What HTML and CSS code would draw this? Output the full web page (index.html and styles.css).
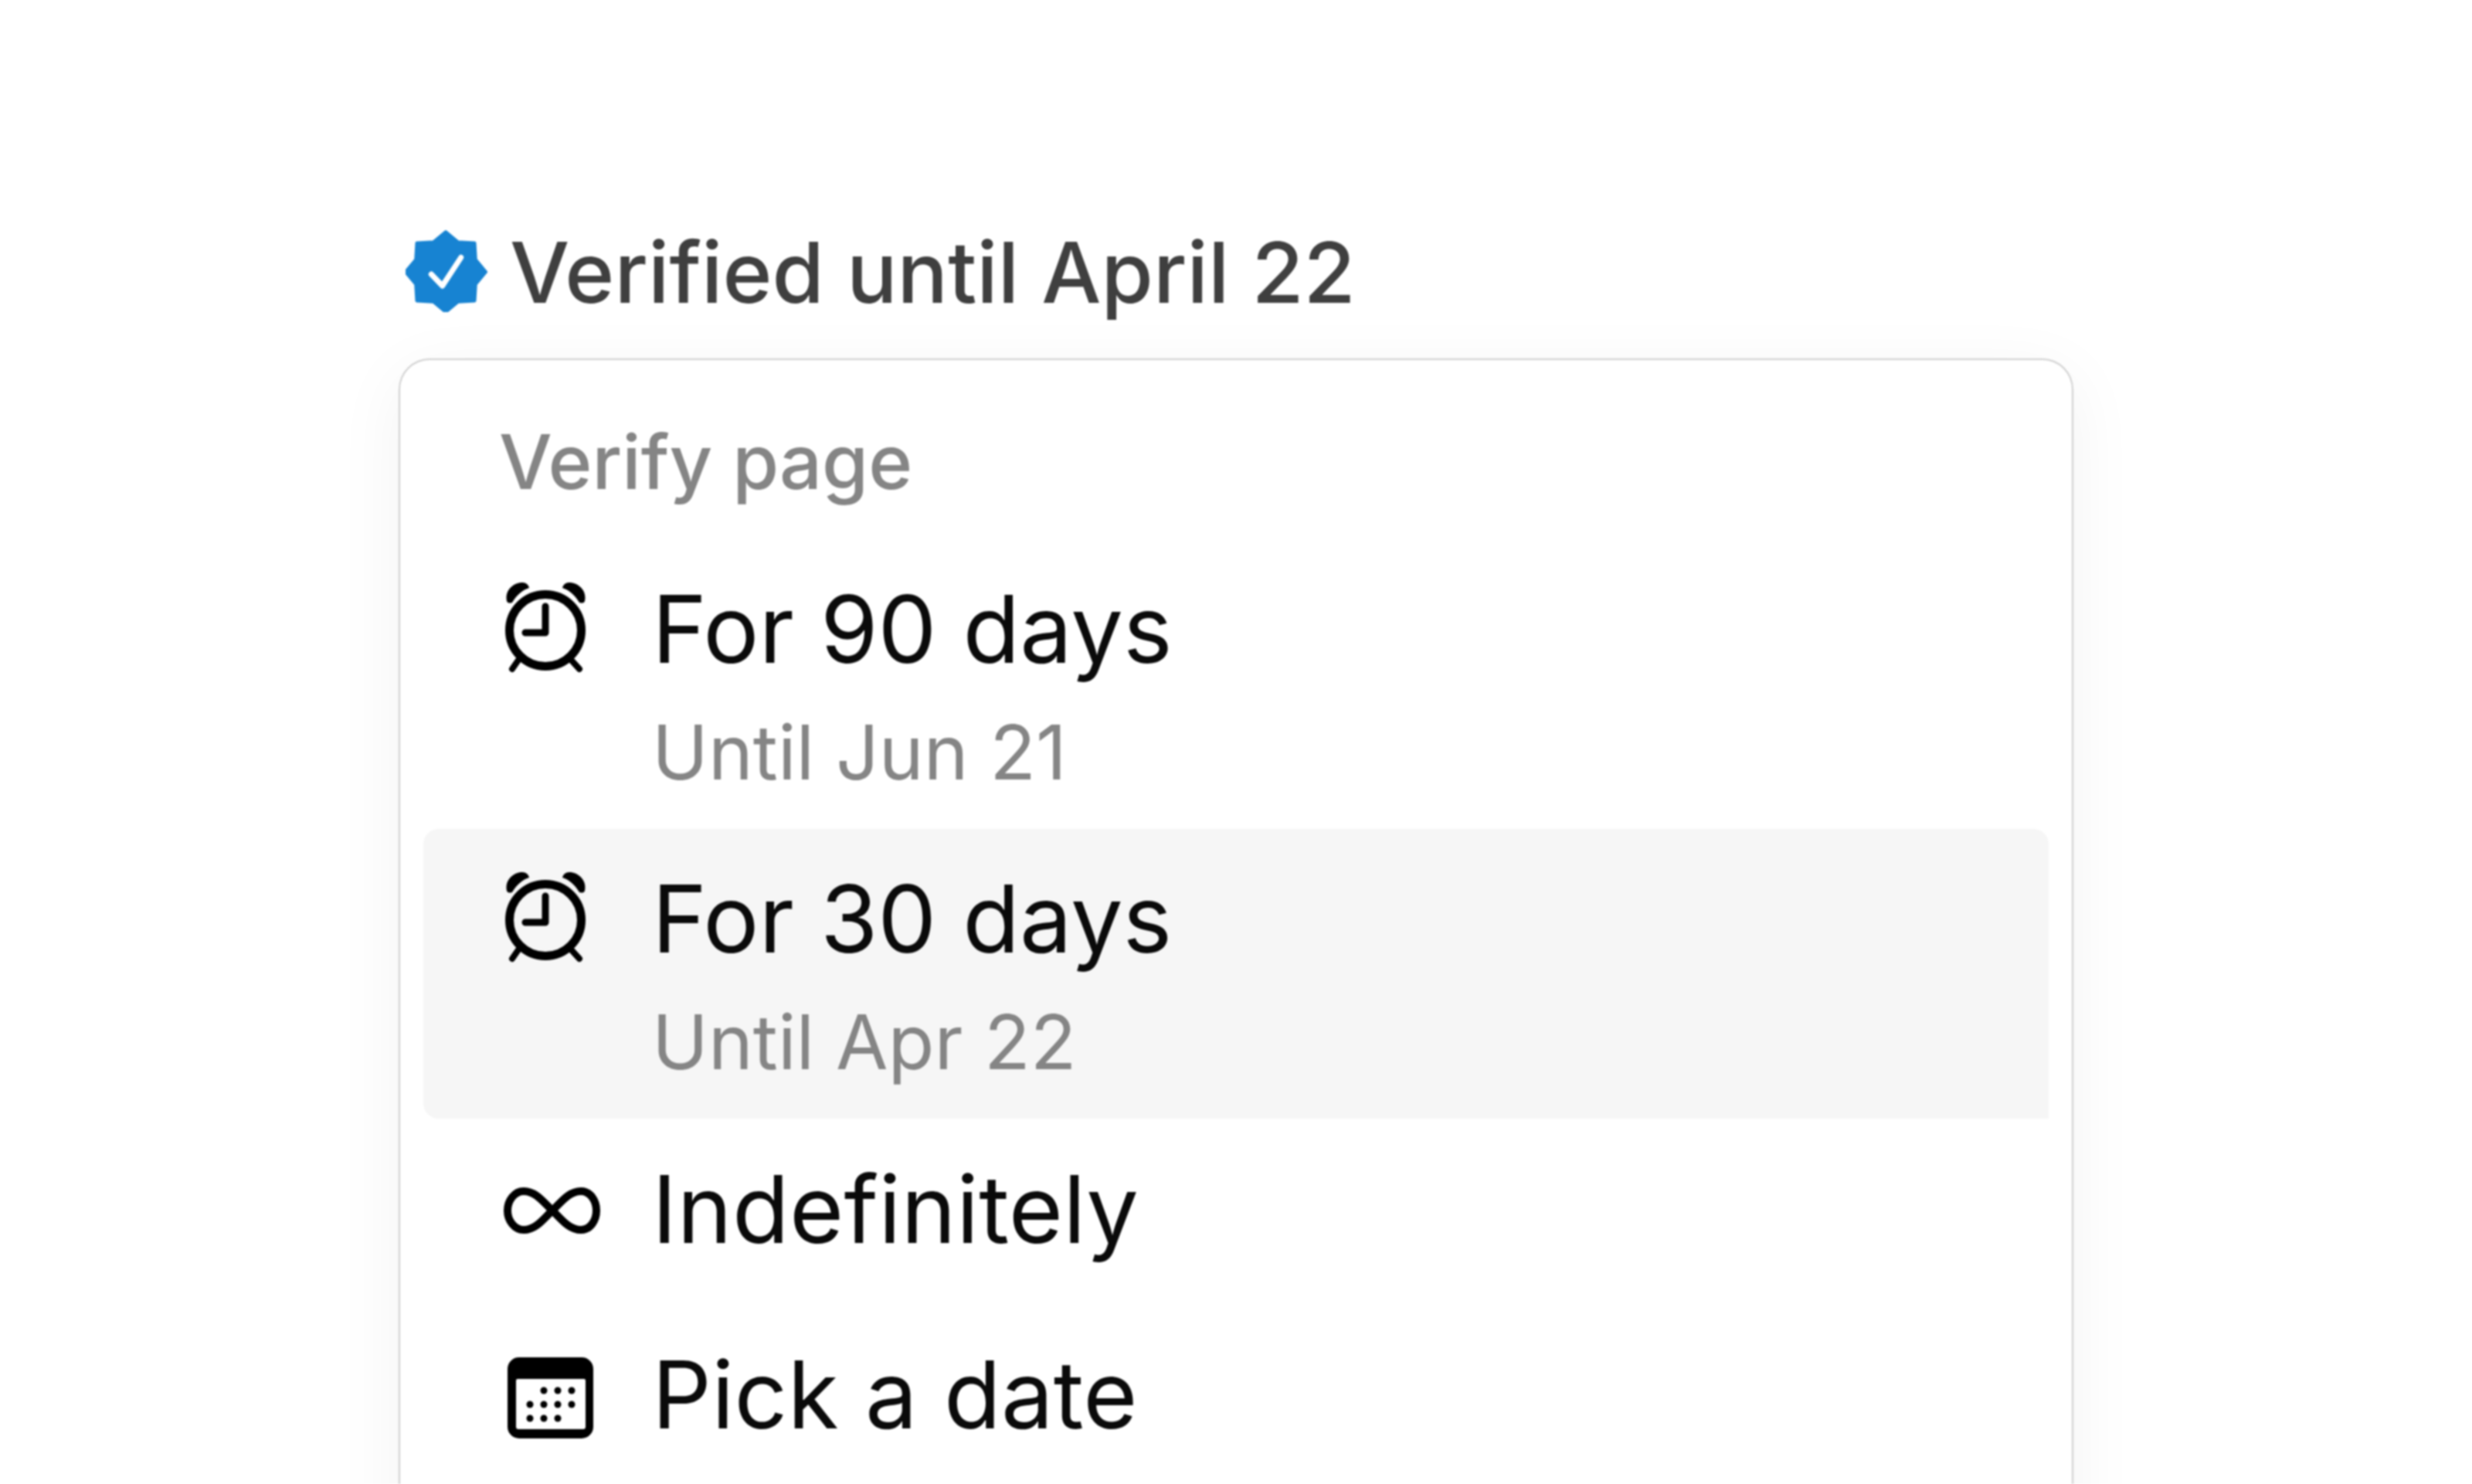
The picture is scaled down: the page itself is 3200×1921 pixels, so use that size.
FILE: index.html
```html
<!DOCTYPE html>
<html lang="en">
<head>
<meta charset="utf-8">
<title>Verify page</title>
<link rel="stylesheet" href="styles.css">
</head>
<body>
<main class="stage">
  <div class="status">
    <svg class="badge" viewBox="0 0 108 108">
      <path fill="#1783d2" stroke="#1783d2" stroke-width="4" stroke-linejoin="round" d="M52 4 L68 17.200 L89.500 18.500 L90.800 40 L104 56 L90.800 72 L89.500 93.500 L68 94.800 L52 108 L36 94.800 L14.500 93.500 L13.200 72 L0 56 L13.200 40 L14.500 18.500 L36 17.200 Z"/>
      <path fill="none" stroke="#fff" stroke-width="7" stroke-linecap="round" stroke-linejoin="round" d="M33.300 59 L47.700 74 L71.700 37.300"/>
    </svg>
    <span>Verified until April 22</span>
  </div>
  <section class="menu">
    <div class="menu-title">Verify page</div>
    <div class="row row-tall">
      <svg class="icon" viewBox="0 0 134 122"><use href="#alarm"/></svg>
      <div class="labels"><div class="label">For 90 days</div><div class="sub">Until Jun 21</div></div>
    </div>
    <div class="row row-tall row-active">
      <svg class="icon" viewBox="0 0 134 122">
        <defs>
          <g id="alarm">
            <circle cx="60" cy="62" r="46.500" fill="none" stroke="#000" stroke-width="11"/>
            <path fill="none" stroke="#000" stroke-width="9" stroke-linecap="round" stroke-linejoin="round" d="M60 31 V65 H34"/>
            <path fill="#000" d="M10 24 C7 10 19 0 30 0 C35 0 38 3 39 7 C30 10 23 16 17 26 C14 27 11 27 10 24 Z"/>
            <path fill="#000" d="M111 24 C114 10 102 0 91 0 C86 0 83 3 82 7 C91 10 98 16 104 26 C107 27 110 27 111 24 Z"/>
            <path fill="none" stroke="#000" stroke-width="8" stroke-linecap="round" d="M26 99 L17 112 M94 101 L104 112"/>
          </g>
        </defs>
        <use href="#alarm"/>
      </svg>
      <div class="labels"><div class="label">For 30 days</div><div class="sub">Until Apr 22</div></div>
    </div>
    <div class="row row-plain">
      <svg class="icon" viewBox="0 0 134 122"><path fill="none" stroke="#000" stroke-width="10" d="M69 60 C58 50 48 35 32 35 C20 35 11 47 11 60 C11 73 20 85 32 85 C48 85 58 70 69 60 C80 50 90 35 106 35 C118 35 126 47 126 60 C126 73 118 85 106 85 C90 85 80 70 69 60 Z"/></svg>
      <div class="label">Indefinitely</div>
    </div>
    <div class="row row-plain">
      <svg class="icon" viewBox="0 0 134 122">
        <path fill="#000" fill-rule="evenodd" d="M26 10 H107 A15 15 0 0 1 122 25 V100 A15 15 0 0 1 107 115 H26 A15 15 0 0 1 11 100 V25 A15 15 0 0 1 26 10 Z M24 38 A2 2 0 0 0 22 40 V100 A3 3 0 0 0 25 103 H109 A3 3 0 0 0 112 100 V40 A2 2 0 0 0 110 38 Z"/>
        <g fill="#000"><circle cx="58" cy="53" r="4.500"/><circle cx="76" cy="53" r="4.500"/><circle cx="94" cy="53" r="4.500"/><circle cx="40" cy="71" r="4.500"/><circle cx="58" cy="71" r="4.500"/><circle cx="76" cy="71" r="4.500"/><circle cx="94" cy="71" r="4.500"/><circle cx="40" cy="89" r="4.500"/><circle cx="58" cy="89" r="4.500"/><circle cx="76" cy="89" r="4.500"/></g>
      </svg>
      <div class="label">Pick a date</div>
    </div>
  </section>
</main>
</body>
</html>
```
FILE: styles.css
```css
* { box-sizing: border-box; }
html, body { margin: 0; height: 100%; background: #fff; overflow: hidden; }
body { font-family: Inter, "Liberation Sans", sans-serif; }
.stage { height: 1921px; padding: 296px 516px 0; overflow: hidden; filter: blur(1px); }
.status { display: flex; align-items: center; height: 108px; padding-left: 9px; gap: 27px; color: #3f3f3f; font-size: 109px; font-weight: 500; }
.status span { padding-top: 4px; }
.badge { width: 108px; height: 108px; flex: none; }
.menu { margin-top: 60px; height: 1600px; border: 2px solid #d0d0d0; border-bottom: 0; border-radius: 40px 40px 0 0; padding: 30px 30px 0; background: #fff; box-shadow: 0 20px 90px rgba(0,0,0,.05); }
.menu-title { height: 202px; padding: 44px 0 0 98px; font-size: 97px; line-height: 116px; font-weight: 500; color: #858585; }
.row { display: flex; height: 240px; padding-left: 98px; gap: 64px; align-items: center; border-radius: 20px; }
.row-tall { height: 375px; align-items: flex-start; padding-top: 56px; }
.row-active { background: #f6f6f6; border-radius: 20px 20px 0 20px; }
.row-plain .label { margin-bottom: 6px; letter-spacing: .2px; }
.icon { width: 134px; height: 122px; flex: none; }
.labels { display: flex; flex-direction: column; }
.label { font-size: 120.5px; line-height: 120px; color: #0a0a0a; }
.sub { font-size: 98px; line-height: 120px; margin-top: 40px; color: #858585; }
```
